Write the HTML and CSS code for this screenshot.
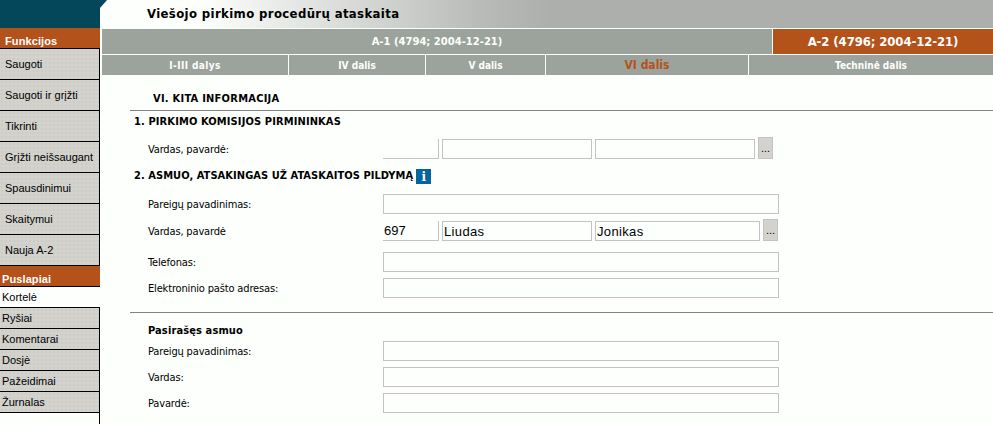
FILE: index.html
```html
<!DOCTYPE html>
<html lang="lt">
<head>
  <meta charset="UTF-8">
  <title>Viešojo pirkimo procedūrų ataskaita</title>
  <link rel="stylesheet" href="styles.css">
</head>
<body>

  <div class="page">
    <div class="sidebar">
      <div class="logo"></div>
      <div class="menu-title functions-title">Funkcijos</div>
      <ul class="functions">
        <li>Saugoti</li>
        <li>Saugoti ir grįžti</li>
        <li>Tikrinti</li>
        <li>Grįžti neišsaugant</li>
        <li>Spausdinimui</li>
        <li>Skaitymui</li>
        <li>Nauja A-2</li>
      </ul>
      <div class="menu-title pages-title">Puslapiai</div>
      <ul class="pages">
        <li class="active">Kortelė</li>
        <li>Ryšiai</li>
        <li>Komentarai</li>
        <li>Dosjė</li>
        <li>Pažeidimai</li>
        <li>Žurnalas</li>
      </ul>
      <div class="sidebar-rest"></div>
    </div>

    <div class="main">
      <div class="header">
        <svg class="corner" width="8" height="8" viewBox="0 0 8 8"><path d="M0 0H7L0 8Z" fill="#04465a"/></svg>
        <h1>Viešojo pirkimo procedūrų ataskaita</h1>
      </div>

      <div class="tabs reports">
        <div class="tab">A-1 (4794; 2004-12-21)</div>
        <div class="tab active">A-2 (4796; 2004-12-21)</div>
      </div>
      <div class="tabs parts">
        <div class="tab first">I-III dalys</div>
        <div class="tab">IV dalis</div>
        <div class="tab">V dalis</div>
        <div class="tab active">VI dalis</div>
        <div class="tab">Techninė dalis</div>
      </div>

      <form class="content">
        <h2 class="part-title">VI. KITA INFORMACIJA</h2>
        <hr>
        <h3>1. PIRKIMO KOMISIJOS PIRMININKAS</h3>
        <div class="row row-chairman">
          <label>Vardas, pavardė:</label>
          <input class="code" type="text">
          <input class="first-name" type="text">
          <input class="last-name" type="text">
          <button type="button">...</button>
        </div>

        <h3 class="responsible">2. ASMUO, ATSAKINGAS UŽ ATASKAITOS PILDYMĄ <span class="info">i</span></h3>
        <div class="row">
          <label>Pareigų pavadinimas:</label>
          <input class="wide" type="text">
        </div>
        <div class="row row-person">
          <label>Vardas, pavardė</label>
          <input class="code" type="text" value="697">
          <input class="first-name" type="text" value="Liudas">
          <input class="last-name long" type="text" value="Jonikas">
          <button type="button">...</button>
        </div>
        <div class="row">
          <label>Telefonas:</label>
          <input class="wide" type="text">
        </div>
        <div class="row">
          <label>Elektroninio pašto adresas:</label>
          <input class="wide" type="text">
        </div>

        <hr class="signature-line">
        <h4>Pasirašęs asmuo</h4>
        <div class="row">
          <label>Pareigų pavadinimas:</label>
          <input class="wide" type="text">
        </div>
        <div class="row">
          <label>Vardas:</label>
          <input class="wide" type="text">
        </div>
        <div class="row">
          <label>Pavardė:</label>
          <input class="wide" type="text">
        </div>
      </form>
    </div>
  </div>

</body>
</html>
```
FILE: styles.css
```css
* {
  box-sizing: border-box;
}

body {
  margin: 0;
  background: #fcfffc;
  color: #000;
  font-family: "DejaVu Sans Condensed", "DejaVu Sans", sans-serif;
  font-size: 11px;
}

.page {
  display: flex;
  height: 424px;
  overflow: hidden;
}

/* left menu */
.sidebar {
  display: flex;
  flex-direction: column;
  width: 100px;
  flex-shrink: 0;
  font-family: "Liberation Sans", Arial, sans-serif;
}

.logo {
  height: 28px;
  background: #04465a;
}

.menu-title {
  height: 21px;
  border-bottom: 1px solid #000;
  background: #b4521c;
  color: #fff;
  font-size: 11px;
  font-weight: bold;
  line-height: 26px;
  letter-spacing: 0.1px;
}

.functions-title {
  padding-left: 5px;
}

.pages-title {
  padding-left: 2px;
}

.sidebar ul {
  list-style: none;
  margin: 0;
  padding: 0;
}

.sidebar li {
  border-right: 1px solid #000;
  border-bottom: 1px solid #000;
  background-color: #d3d2cd;
  background-image: radial-gradient(circle, #c9c9c5 0.6px, transparent 0.9px);
  background-size: 4px 4px;
  white-space: nowrap;
}

.functions li {
  height: 31px;
  padding-left: 5px;
  line-height: 31px;
}

.pages li {
  height: 21px;
  padding-left: 2px;
  line-height: 21px;
}

.pages li.active {
  border-right: none;
  background: #fcfffc;
}

.sidebar-rest {
  flex: 1;
  border-right: 1px solid #000;
}

/* header and tabs */
.main {
  flex: 1;
}

.header {
  position: relative;
  height: 28px;
  padding-left: 47px;
  background: linear-gradient(to right, #fcfffc 100px, #e4e6e3 200px, #cccfcb 300px, #b9bbb8 380px, #acafab 450px);
}

.corner {
  position: absolute;
  left: 0;
  top: 0;
}

h1 {
  margin: 0;
  font-size: 13px;
  line-height: 27px;
  letter-spacing: 0.37px;
}

.tabs {
  display: grid;
  gap: 1px;
  margin: 1px 0 0 2px;
  color: #fcfffc;
  font-size: 10px;
  font-weight: bold;
  text-align: center;
}

.tab {
  background: #9ca39c;
}

.reports {
  grid-template-columns: 670px 220px;
  font-family: "DejaVu Sans", sans-serif;
  line-height: 25px;
}

.reports .active {
  background: #b4521c;
  font-family: "DejaVu Sans Condensed", "DejaVu Sans", sans-serif;
  font-size: 13px;
  letter-spacing: -0.1px;
}

.parts {
  grid-template-columns: 186px 136px 119px 202px 244px;
  line-height: 21px;
  height: 20px;
}

.parts .first {
  letter-spacing: 0.4px;
}

.parts .active {
  color: #b4521c;
  font-size: 12px;
}

.parts .tab {
  height: 20px;
}

/* form */
.content {
  padding-left: 30px;
}

h2, h3, h4 {
  margin: 0;
  font-size: 11px;
}

.part-title {
  padding: 13px 0 0 23px;
  line-height: 22px;
  letter-spacing: 0.25px;
}

hr {
  height: 1px;
  margin: 0;
  border: none;
  background: #848284;
}

h3 {
  display: flex;
  align-items: center;
  height: 22px;
  padding-left: 4px;
  line-height: 24px;
  letter-spacing: 0.12px;
}

.responsible {
  margin: 3px 0 4px;
  letter-spacing: 0.06px;
}

.info {
  width: 15px;
  height: 15px;
  margin-left: 3px;
  background: #04659c;
  color: #fcfffc;
  font-family: "DejaVu Serif", serif;
  font-size: 12px;
  line-height: 16px;
  text-align: center;
}

h4 {
  padding: 10px 0 0 18px;
  line-height: 15px;
  letter-spacing: 0.12px;
}

.row {
  display: flex;
  align-items: flex-end;
  height: 26px;
  padding: 0 0 3px 18px;
}

.row-chairman {
  margin-top: 3px;
}

.row-person {
  margin: 1px 0 5px;
}

label {
  width: 235px;
  height: 20px;
  line-height: 22px;
  letter-spacing: -0.16px;
}

input {
  height: 20px;
  margin: 0 3px 0 0;
  padding: 0 1px;
  border: 1px solid #c4c2c4;
  background: transparent;
  font-family: "Liberation Sans", Arial, sans-serif;
  font-size: 13px;
  letter-spacing: 0.35px;
}

.code {
  width: 56px;
  border-width: 0 1px 1px 0;
  letter-spacing: 0;
}

.first-name {
  width: 150px;
}

.last-name {
  width: 160px;
}

.last-name.long {
  width: 165px;
}

.wide {
  width: 396px;
}

button {
  width: 15px;
  height: 22px;
  padding: 0;
  border: 1px solid #c4c2c4;
  background: #d3d2cd;
  font-family: "Liberation Sans", Arial, sans-serif;
  font-size: 11px;
}

.signature-line {
  margin-top: 11px;
}
```
